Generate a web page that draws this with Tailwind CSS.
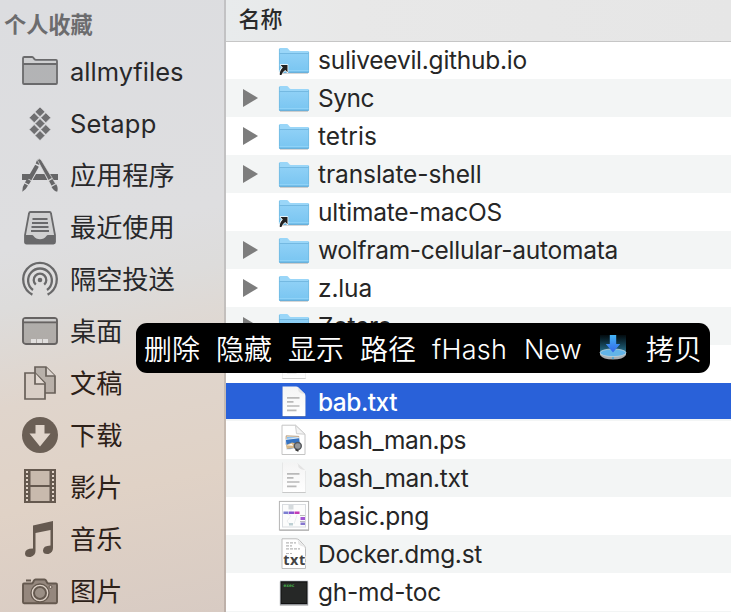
<!DOCTYPE html>
<html lang="zh-CN">
<head>
<meta charset="utf-8">
<title>Finder</title>
<script src="https://cdn.jsdelivr.net/npm/@tailwindcss/browser@4"></script>
</head>
<body class="w-[731px] h-[612px] overflow-hidden relative bg-white font-['Inter','Noto_Sans_CJK_SC',sans-serif] text-[#262626]">

<svg class="absolute w-0 h-0">
  <defs>
    <linearGradient id="fg" x1="0" y1="0" x2="0" y2="1"><stop offset="0" stop-color="#8fd0f6"/><stop offset="1" stop-color="#78c5f1"/></linearGradient>
    <linearGradient id="pg" x1="0" y1="0" x2="0" y2="1"><stop offset="0" stop-color="#f4f4f4"/><stop offset="1" stop-color="#ffffff"/></linearGradient>
    <symbol id="folder" viewBox="0 0 34 38">
      <path d="M3 32.3h28" stroke="#000" stroke-opacity=".16" stroke-width="1.4"/>
      <path d="M2 31V8.2Q2 7 3.2 7h6.6q1 0 1.6.9l.8 1.1q.6.9 1.6.9h17Q32 9.900 32 11v20q0 .8-.8.8H2.800Q2 31.800 2 31z" fill="#9ad6f8"/>
      <path d="M2 12.500h30V31q0 .8-.8.8H2.800Q2 31.800 2 31z" fill="url(#fg)"/>
      <path d="M2.400 12.500h29.200" stroke="#71b5df" stroke-width=".9"/>
      <path d="M2.400 8v23M31.600 11v20" stroke="#6fb7e0" stroke-width=".7"/>
      <path d="M2.500 29.500h29" stroke="#8fd2f7" stroke-width="1"/>
      <path d="M2.500 31.300h29" stroke="#63a9d4" stroke-width="1"/>
    </symbol>
    <symbol id="alias" viewBox="0 0 34 38">
      <use href="#folder" width="34" height="38"/>
      <path d="M3.500 24h7v7.200l-2.300-2.300q-3 2-3.800 5H2.800q-.4-4.300 3-7.500z" fill="#222" stroke="#fff" stroke-width="1.500" stroke-linejoin="round" paint-order="stroke"/>
    </symbol>
    <symbol id="doc" viewBox="0 0 34 38">
      <path d="M5.500 33.500h23" stroke="#000" stroke-opacity=".25" stroke-width="1"/>
      <path d="M5.500 3.500H19q1.500 0 2.500 1l6 6q1 1 1 2.500v20.300h-23z" fill="url(#pg)"/>
      <path d="M5.500 3.500v30M28.500 12v21.500" stroke="#000" stroke-opacity=".07" stroke-width=".8"/>
      <path d="M20 3.700q1.500 1.300 1.400 4.300 2 2.800 7 3.200z" fill="#e3e3e3"/>
      <path d="M10 14.800h12.500M10 18.800h6.500M10 23h12.500M10 27.300h9.500" stroke="#b9b9b9" stroke-width="1.700"/>
    </symbol>
    <symbol id="ps" viewBox="0 0 34 38">
      <path d="M5 4.200h13.500l9.500 9v20.300H5z" fill="#fff" stroke="#c4c4c4" stroke-width="1"/>
      <path d="M18.500 4.300l1 8.400 8.500.5z" fill="#f4f4f4" stroke="#cfcfcf" stroke-width="1"/>
      <path d="M9.200 14.800l12.600.6-.2 9-12.800-1z" fill="#f4ead9" stroke="#a98b6b" stroke-width=".8"/>
      <path d="M10 16l11 .4-.1 3-11-.6z" fill="#7ebcf3"/>
      <path d="M8.300 18.500l14.300-1.800 1 9.800-13.800 2.200z" fill="#3673c2" stroke="#fff" stroke-width=".8"/>
      <path d="M9 24l6-2.500 8.300 2 .2 2.600-13.600 2z" fill="#d8b888"/>
      <path d="M9.500 24.200l5-1.500 2 2z" fill="#fff"/>
      <circle cx="20.800" cy="25" r="3.500" fill="#93979c" stroke="#55585c" stroke-width="1.400"/>
      <path d="M18.500 28.500l3 1.600" stroke="#333" stroke-width="1.500"/>
    </symbol>
    <symbol id="png" viewBox="0 0 34 38">
      <rect x="2.500" y="5" width="29.500" height="29" fill="#000" fill-opacity=".25"/>
      <rect x="2.400" y="4.400" width="29.200" height="28.500" fill="#fff" stroke="#b5b5b5" stroke-width="1"/>
      <rect x="5.500" y="7.500" width="23" height="22.500" fill="#fcfcfc" stroke="#d9dce0" stroke-width="1"/>
      <rect x="11.500" y="8" width="5" height="4.500" fill="#d5dadd"/>
      <path d="M14 12v3M9 16l5 3-4 5 3 4M20 18l-3 9" stroke="#e3e6ea" stroke-width=".7" fill="none"/>
      <rect x="6.500" y="14.500" width="5" height="2.500" fill="#7b7ed1"/><rect x="12" y="14.500" width="5" height="2.500" fill="#8753cf"/><rect x="17.500" y="14.500" width="5" height="2.500" fill="#c33bb5"/>
      <rect x="23.500" y="20" width="4.500" height="3" fill="#a357d5"/><rect x="23.500" y="25.500" width="4.500" height="2.500" fill="#8676cf"/><path d="M23 18.500h5M23 24.500h5" stroke="#aaa" stroke-width=".8"/>
      <rect x="12" y="26" width="4" height="2.500" fill="#bdcfd3"/>
    </symbol>
    <symbol id="st" viewBox="0 0 34 38">
      <path d="M5 3.800h14q2 0 3.500 1.500l4.500 5q1.500 1.500 1.500 3.500v19.700H5z" fill="#fff" stroke="#bdbdbd" stroke-width="1"/>
      <path d="M20 4q1.500 2 1.200 5 2.500 2.700 6.800 3z" fill="#e8e8e8"/>
      <path d="M9 7.800h10M9 10.800h6M9 13.800h14M9 18.500h6" stroke="#b8b8b8" stroke-width="1.200" stroke-dasharray="3 1"/>
      <text x="17.300" y="30.300" text-anchor="middle" font-family="Open Sans, sans-serif" font-weight="700" font-size="14.500" textLength="22" fill="#444" stroke="#fff" stroke-width="1.500" paint-order="stroke">txt</text>
    </symbol>
    <symbol id="exec" viewBox="0 0 34 38">
      <rect x="2.800" y="9" width="28.400" height="24" fill="#000" fill-opacity=".22"/>
      <rect x="3.200" y="8" width="27.600" height="23.500" fill="#111" stroke="#aab0b8" stroke-width=".6"/>
      <rect x="4.500" y="9.500" width="25" height="20.500" fill="#262827"/>
      <text x="6.500" y="14.300" font-family="DejaVu Sans Mono, monospace" font-weight="700" font-size="4.600" fill="#46b04c">exec</text>
    </symbol>

    <symbol id="s-folder" viewBox="0 0 40 52">
      <path d="M3 37V12.300Q3 11 4.300 11h7.500q1 0 1.600.8l1 1.300q.6.800 1.600.8h20q1 0 1 1V37q0 1-1 1H4q-1 0-1-1z" fill="currentColor" fill-opacity=".12"/>
      <path d="M3 18h34v19q0 1-1 1H4q-1 0-1-1z" fill="currentColor" fill-opacity=".28"/>
      <path d="M3 18.500Q3 18 4.500 18h31q1.500 0 1.500.500M3 37V12.300Q3 11 4.300 11h7.500q1 0 1.600.8l1 1.300q.6.800 1.600.8h20q1 0 1 1V37q0 1-1 1H4q-1 0-1-1z" fill="none" stroke="currentColor" stroke-width="1.800"/>
    </symbol>
    <symbol id="s-setapp" viewBox="0 0 40 52">
      <path d="M20 8.900l5 4.900-5 4.900-5-4.900zM14.200 14.700l5 5-5 5-5-5zM25.800 14.700l5 5-5 5-5-5zM20 20.600l5 5-5 5-5-5zM14.200 26.600l5 5-5 5-5-5zM25.800 26.600l5 5-5 5-5-5zM20 32.600l5 5-5 5-5-5z" fill="currentColor" stroke="#dddde0" stroke-width=".7"/>
    </symbol>
    <symbol id="s-apps" viewBox="0 0 40 52">
      <g fill="currentColor">
        <path d="M2 24h9l-3 6H2zM29 24h9v6h-6zM16 24h8.500l3 6H12.500z"/>
        <path d="M16.800 10.500q2-2 3.400.5l-1 4-3.500-1.500zM15.200 14.700l3.600 2-7.400 13.500-4-2zM7 28.800l4 2.200-2.200 3.500-3.800-2zM4.500 33.500l3.500 2q-1.600 3.700-5.700 6.200-.5-4.300 2.200-8.200z"/>
        <path d="M17.500 10.200q1.500-2.500 3.700-.3l14.400 23.800-4.200 2.400z" stroke="#ddd" stroke-width=".7"/>
        <path d="M31.500 37l4.700-2.700q2.400 3.700 1 7.500-3.400-.8-5.700-4.800z"/>
      </g>
      <path d="M27 31.500l5-3" stroke="#ddd" stroke-width="1.300"/>
    </symbol>
    <symbol id="s-recent" viewBox="0 0 40 52">
      <path d="M9 11.500q.2-1.500 1.500-1.500h19q1.300 0 1.500 1.500L35 33v7q0 1.500-1.500 1.500h-27Q5 41.500 5 40v-7z" fill="currentColor" fill-opacity=".12" stroke="currentColor" stroke-width="1.800"/>
      <path d="M5 33h7q1 0 1.600 1 2.400 3.300 6.400 3.300t6.400-3.300q.6-1 1.600-1h7v7q0 2-1.500 2h-27Q5 42 5 40z" fill="currentColor"/>
      <path d="M12.500 17h15M12 21h16M11.500 25h17M11 29h18" stroke="currentColor" stroke-width="1.800"/>
    </symbol>
    <symbol id="s-airdrop" viewBox="0 0 40 52">
      <circle cx="20" cy="26" r="2.300" fill="currentColor"/>
      <g fill="none" stroke="currentColor" stroke-width="2.300"><path d="M15.800 30.700a6.300 6.300 0 1 1 8.400 0M13 36a11.900 11.900 0 1 1 14 0M12.400 40.600a16.800 16.800 0 1 1 15.200 0"/></g>
    </symbol>
    <symbol id="s-desktop" viewBox="0 0 40 52">
      <rect x="3" y="12" width="34" height="26" rx="2.800" fill="currentColor" fill-opacity=".38" stroke="currentColor" stroke-width="1.900"/>
      <rect x="4" y="13" width="32" height="2.500" fill="#ddd" fill-opacity=".65"/>
      <path d="M3 16.300h34" stroke="currentColor" stroke-width="1.700"/>
      <path d="M11 33h5v4h-5zM17 33h5v4h-5zM23 33h5v4h-5z" fill="#e1dfde"/>
    </symbol>
    <symbol id="s-docs" viewBox="0 0 40 52">
      <g stroke="currentColor" stroke-width="1.700"><path d="M15 9h11l9 9v17H15z" fill="currentColor" fill-opacity=".32"/><path d="M26 9v9h9" fill="#dcd5d0"/>
      <path d="M5 15h10l10 10v16H5z" fill="#d8cec6"/><path d="M15 15v11h10" fill="#e3dad3"/></g>
    </symbol>
    <symbol id="s-down" viewBox="0 0 40 52">
      <circle cx="20" cy="25" r="18" fill="currentColor"/>
      <path d="M15.500 15h9v8.500h6L20 36.500 9.500 23.500h6z" fill="#e1d5cb"/>
    </symbol>
    <symbol id="s-film" viewBox="0 0 40 52">
      <path d="M4 7h32v34H4z" fill="currentColor"/>
      <path d="M10.500 9h19v14h-19zM10.500 25h19v14h-19z" fill="#c8baad"/>
      <path d="M7 9v31M33 9v31" stroke="#e0d3c8" stroke-width="2" stroke-dasharray="2 2"/>
    </symbol>
    <symbol id="s-music" viewBox="0 0 40 52">
      <path d="M13 11.500L33 7v27q0 4.500-4.500 6-5.500.6-5.500-3.500 0-4.800 7.500-5V16L15.500 19v18q0 4.500-5 6-5.500.5-5.500-3.500 0-5 8-5z" fill="currentColor"/>
    </symbol>
    <symbol id="s-camera" viewBox="0 0 40 52">
      <path d="M6 14.500h5" stroke="currentColor" stroke-width="2"/>
      <path d="M4 17.500h7.500q1 0 1.500-1l1-2q.5-1 1.500-1h9q1 0 1.500 1l1 2q.5 1 1.500 1H36q1 0 1 1.200V36q0 1.200-1 1.200H4q-1 0-1-1.200V18.700q0-1.200 1-1.200z" fill="currentColor" fill-opacity=".6" stroke="currentColor" stroke-width="1.900"/>
      <circle cx="20" cy="27" r="9" fill="#ddd1c7" stroke="currentColor" stroke-width="1.300"/><circle cx="20" cy="27" r="6" fill="currentColor" fill-opacity=".55" stroke="currentColor" stroke-width="2"/>
      <circle cx="30.500" cy="21" r="1.500" fill="#ddd1c7" stroke="currentColor" stroke-width="1"/>
    </symbol>
  </defs>
</svg>

<div class="flex h-full">
  <aside class="w-[224px] shrink-0 h-full overflow-hidden bg-[linear-gradient(168deg,#dcdde0_0%,#dedee0_38%,#dddcdb_47%,#e0d5cc_62%,#e0d2c6_78%,#d8cbc3_100%)]">
    <div class="h-[46px] pl-[4px] leading-[50px] text-[22.200px] font-semibold text-[#6c6c6e]">个人收藏</div>
    <nav id="side"></nav>
  </aside>
  <div class="w-[2px] shrink-0 bg-[linear-gradient(180deg,#c2c2c4_0%,#c2c1c1_45%,#c6b9af_70%,#bdb0a9_100%)]"></div>
  <main class="flex-1 min-w-0 h-full overflow-hidden">
    <header class="h-[41px] bg-[linear-gradient(90deg,#e8ebec_0%,#e8e8e8_25%,#e6e6e6_100%)] pl-[12.500px] leading-[39px] text-[22px] font-medium text-[#2a2a2a] shadow-[0_1px_0_0_#c6c6c6] relative">名称</header>
    <div id="files"></div>
  </main>
</div>

<div class="absolute left-[136px] top-[323px] w-[574px] h-[50px] rounded-[11px] bg-black flex pl-[8px] gap-[16px] text-white text-[28px] leading-[54px] font-[350] whitespace-nowrap">
  <span class="w-[56px]">删除</span><span class="w-[56px]">隐藏</span><span class="w-[56px]">显示</span><span class="w-[56px]">路径</span>
  <span class="w-[76px] text-[27px]" data-w="76.5" data-size="27">fHash</span>
  <span class="w-[58px] text-[27px]" data-w="58" data-size="27">New</span>
  <svg class="w-[30px] h-[30px] mt-[10px] shrink-0" viewBox="0 0 30 30">
    <defs><linearGradient id="glow" x1="0" y1="0" x2="0" y2="1"><stop offset="0" stop-color="#1a6f94" stop-opacity=".1"/><stop offset="1" stop-color="#348cae" stop-opacity=".85"/></linearGradient>
    <linearGradient id="arr" x1="0" y1="0" x2="0" y2="1"><stop offset="0" stop-color="#45b5f7"/><stop offset="1" stop-color="#3366ea"/></linearGradient></defs>
    <path d="M2 2h26v18H2z" fill="url(#glow)"/>
    <path d="M2 19.500v2.500q3 4.500 13 4.500T28 22v-2.500z" fill="#a8adb1"/>
    <ellipse cx="15" cy="19.800" rx="13" ry="3.800" fill="#62b4e8" stroke="#bfd0d8" stroke-width=".8"/>
    <path d="M11.800 2h6.400v9h4L15 19.500 7.800 11h4z" fill="url(#arr)"/>
    <circle cx="15" cy="25" r=".9" fill="#39a5dc"/>
  </svg>
  <span class="w-[56px] ml-[2px]">拷贝</span>
</div>

<script>
  const side = [
    ['s-folder', 'allmyfiles', 113.5, 'text-[#6a6a6c]'],
    ['s-setapp', 'Setapp', 86.5, 'text-[#6f6f71]'],
    ['s-apps', '应用程序', 0, 'text-[#666668]'],
    ['s-recent', '最近使用', 0, 'text-[#69696b]'],
    ['s-airdrop', '隔空投送', 0, 'text-[#69696a]'],
    ['s-desktop', '桌面', 0, 'text-[#666362]'],
    ['s-docs', '文稿', 0, 'text-[#686059]'],
    ['s-down', '下载', 0, 'text-[#6b5f55]'],
    ['s-film', '影片', 0, 'text-[#65594f]'],
    ['s-music', '音乐', 0, 'text-[#65594f]'],
    ['s-camera', '图片', 0, 'text-[#65594f]']
  ];
  document.getElementById('side').innerHTML = side.map(([icon, name, w, color], i) => `
    <div class="h-[52px] flex pl-[20px]">
      <svg class="w-[40px] h-[52px] shrink-0 ${color}"><use href="#${icon}"/></svg>
      <span class="ml-[10px] leading-[52px] whitespace-nowrap ${w ? 'text-[25.500px]' : 'text-[26.200px]'} ${i > 5 ? 'text-[#2d2119]' : 'text-[#28282a]'}" ${w ? `data-w="${w}" data-size="25.5"` : ''}>${name}</span>
    </div>`).join('');

  const files = [
    ['alias', 'suliveevil.github.io', 0, 209],
    ['folder', 'Sync', 1, 56],
    ['folder', 'tetris', 1, 59],
    ['folder', 'translate-shell', 1, 163.5],
    ['alias', 'ultimate-macOS', 0, 184],
    ['folder', 'wolfram-cellular-automata', 1, 300],
    ['folder', 'z.lua', 1, 54],
    ['folder', 'Zotero', 1, 74],
    ['doc', 'aaa.txt', 0, 78],
    ['doc', 'bab.txt', 0, 79],
    ['ps', 'bash_man.ps', 0, 148],
    ['doc', 'bash_man.txt', 0, 150.5],
    ['png', 'basic.png', 0, 111],
    ['st', 'Docker.dmg.st', 0, 164],
    ['exec', 'gh-md-toc', 0, 123]
  ];
  document.getElementById('files').innerHTML = files.map(([icon, name, arrow, w]) => {
    const selected = name === 'bab.txt';
    return `<div class="h-[38px] even:bg-[#f3f5f5]"><div class="flex ${selected ? 'h-[36px] bg-[#2961d9] text-white font-medium' : 'h-[38px]'}">
      <svg class="w-[51px] h-[38px] shrink-0" viewBox="0 0 51 38">${arrow ? '<path d="M17 10v18l15-9z" fill="#7d7d7d"/>' : ''}</svg>
      <svg class="w-[34px] h-[38px] shrink-0"><use href="#${icon}"/></svg>
      <span class="ml-[7px] text-[24.500px] leading-[38px] whitespace-nowrap" data-w="${w}" data-size="24.5" data-weight="${selected ? 500 : 400}">${name}</span>
    </div></div>`;
  }).join('') + '<div class="h-[1px] bg-[#f3f5f5]"></div>';

  const ctx = document.createElement('canvas').getContext('2d');
  document.querySelectorAll('[data-w]').forEach(el => {
    ctx.font = `${el.dataset.weight || 400} ${el.dataset.size}px Inter`;
    const name = el.textContent;
    el.style.letterSpacing = ((el.dataset.w - ctx.measureText(name).width) / name.length).toFixed(3) + 'px';
  });
</script>
</body>
</html>
